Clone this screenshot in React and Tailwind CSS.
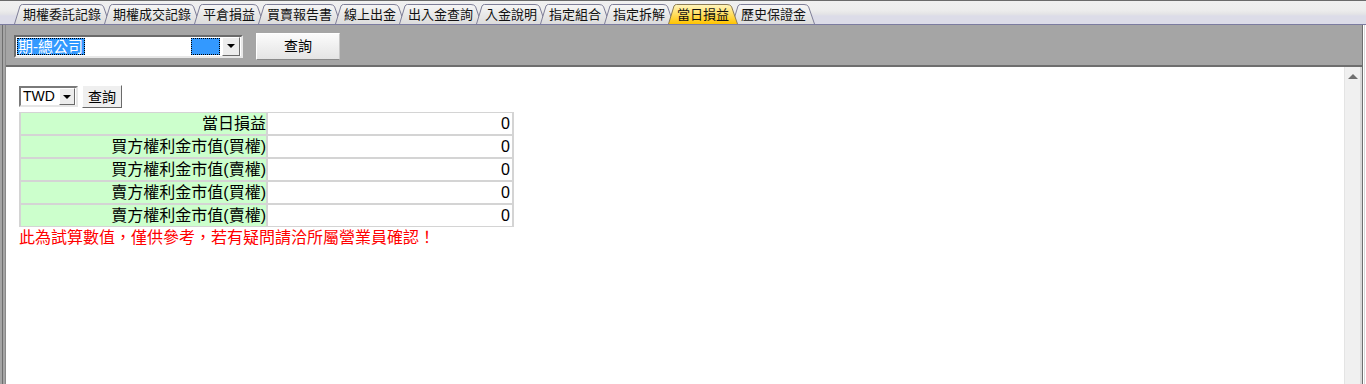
import React from "react";

const TABS = [
  "期權委託記錄",
  "期權成交記錄",
  "平倉損益",
  "買賣報告書",
  "線上出金",
  "出入金查詢",
  "入金說明",
  "指定組合",
  "指定拆解",
  "當日損益",
  "歷史保證金",
];
const ACTIVE = 9;

const ROWS = [
  "當日損益",
  "買方權利金市值(買權)",
  "買方權利金市值(賣權)",
  "賣方權利金市值(買權)",
  "賣方權利金市值(賣權)",
];

function Tab({ label, idx }) {
  const active = idx === ACTIVE;
  const w = label.length * 13 + 18;
  const h = 20;
  const d = `M0.5 ${h} L6 2 Q6.8 0.5 8.5 0.5 L${w - 11} 0.5 Q${w - 8} 0.5 ${w - 6.5} 2.5 L${w - 0.5} ${h}`;
  return (
    <div
      className={
        active
          ? "relative z-10 -ml-[6px] h-[20px] shrink-0 first:ml-0"
          : "relative -ml-[6px] h-[20px] shrink-0 first:ml-0"
      }
      style={{ width: w }}
    >
      <svg className="absolute inset-0" width={w} height={h}>
        <defs>
          <linearGradient id={`tab${idx}`} x1="0" y1="0" x2="0" y2="1">
            <stop offset="0" stopColor={active ? "#fff6c0" : "#f6f6f6"} />
            <stop offset="1" stopColor={active ? "#ffc400" : "#dcdcdc"} />
          </linearGradient>
        </defs>
        <path
          d={d}
          fill={`url(#tab${idx})`}
          stroke={active ? "#8c7c54" : "#7e7e98"}
          strokeWidth="1"
        />
      </svg>
      <span className="relative block pl-[9px] text-[13px] leading-[21px] text-[#111]">
        {label}
      </span>
    </div>
  );
}

function DropArrow() {
  return (
    <span className="h-0 w-0 border-l-[4px] border-r-[4px] border-t-[4px] border-l-transparent border-r-transparent border-t-black" />
  );
}

export default function App() {
  return (
    <div className="flex h-[384px] w-[1366px] flex-col overflow-hidden bg-white font-['Liberation_Sans','Noto_Sans_CJK_TC',sans-serif]">
      {/* top edge */}
      <div className="h-px bg-[#6a6a6a]" />

      {/* tab strip */}
      <div className="flex h-[24px] items-end border-b border-[#7c7ca0] bg-[linear-gradient(#f0f0f0_0,#ededed_9px,#e4e4e6_13px,#dcdce8_15px)] pl-[14px]">
        {TABS.map((t, i) => (
          <Tab key={t} label={t} idx={i} />
        ))}
      </div>

      <div className="flex min-h-0 flex-1">
        {/* left frame */}
        <div className="flex w-[6px] shrink-0">
          <div className="w-[2px] bg-[#a5a5a5]" />
          <div className="w-px bg-[#6e6e6e]" />
          <div className="w-[2px] bg-[#a5a5a5]" />
          <div className="w-px bg-[#8a8a8a]" />
        </div>

        <div className="flex min-w-0 flex-1 flex-col">
          {/* toolbar */}
          <div className="flex h-[42px] shrink-0 items-center gap-[13px] border-b-2 border-[#6e6e6e] bg-[#a5a5a5] pl-[8px] pt-[2px]">
            <div className="flex h-[23px] w-[229px] items-center border-2 border-t-[#6a6a6a] border-l-[#6a6a6a] border-b-[#e8e8e8] border-r-[#e8e8e8] bg-white pl-px pr-px">
              <span className="border border-dotted border-black bg-[#3399ff] pr-px text-[15px] leading-[15px] text-white">
                期-總公司
              </span>
              <span className="ml-auto h-[17px] w-[29px] border border-dotted border-black bg-[#3399ff]" />
              <span className="ml-[2px] flex h-[19px] w-[18px] items-center justify-center border border-t-white border-l-white border-b-[#6a6a6a] border-r-[#6a6a6a] bg-[#ececec]">
                <DropArrow />
              </span>
            </div>
            <button className="h-[27px] w-[84px] border border-t-white border-l-white border-b-[#8a8a8a] border-r-[#c8c8c8] bg-[linear-gradient(#fbfbfb,#e4e4e4)] text-[14px] text-black">
              查詢
            </button>
          </div>

          {/* content */}
          <div className="flex min-h-0 flex-1">
            <div className="min-w-0 flex-1 pl-[13px] pt-[18px]">
              <div className="flex items-center gap-[4px]">
                <div className="flex h-[21px] w-[59px] items-center border-2 border-t-[#7a7a7a] border-l-[#7a7a7a] border-b-[#e6e6e6] border-r-[#e6e6e6] bg-white">
                  <span className="pl-[2px] text-[14px] leading-[17px] text-black">TWD</span>
                  <span className="ml-auto mr-px flex h-[17px] w-[16px] items-center justify-center border border-t-white border-l-white border-b-[#6a6a6a] border-r-[#6a6a6a] bg-[#ececec]">
                    <DropArrow />
                  </span>
                </div>
                <button className="h-[23px] w-[40px] border border-t-white border-l-white border-b-[#6a6a6a] border-r-[#6a6a6a] bg-[#efefef] text-[14px] leading-[20px] text-black">
                  查詢
                </button>
              </div>

              <div className="mt-[4px] grid w-[495px] grid-cols-[245px_1fr] gap-[2px] bg-[#d4d4d4] px-[2px] py-px">
                {ROWS.map((r) => (
                  <React.Fragment key={r}>
                    <div className="h-[21px] bg-[#ccffcc] text-right text-[16px] leading-[21px] text-black">
                      {r}
                    </div>
                    <div className="h-[21px] bg-white pr-[2px] text-right text-[16px] leading-[21px] text-black">
                      0
                    </div>
                  </React.Fragment>
                ))}
              </div>

              <p className="mt-px text-[16px] leading-[20px] text-[#ff0000]">
                此為試算數值，僅供參考，若有疑問請洽所屬營業員確認！
              </p>
            </div>

            {/* scrollbar */}
            <div className="flex w-[18px] shrink-0 justify-center border-l border-r-2 border-l-[#e4e4e4] border-r-[#d8d8d8] bg-[#f0f0f0] pt-[7px]">
              <span className="h-0 w-0 border-b-[5px] border-l-[5px] border-r-[5px] border-b-[#707070] border-l-transparent border-r-transparent" />
            </div>
          </div>
        </div>

        {/* right frame */}
        <div className="flex w-[4px] shrink-0">
          <div className="w-px bg-[#6e6e6e]" />
          <div className="w-px bg-white" />
          <div className="w-px bg-[#d8d8d8]" />
          <div className="w-px bg-white" />
        </div>
      </div>
    </div>
  );
}
